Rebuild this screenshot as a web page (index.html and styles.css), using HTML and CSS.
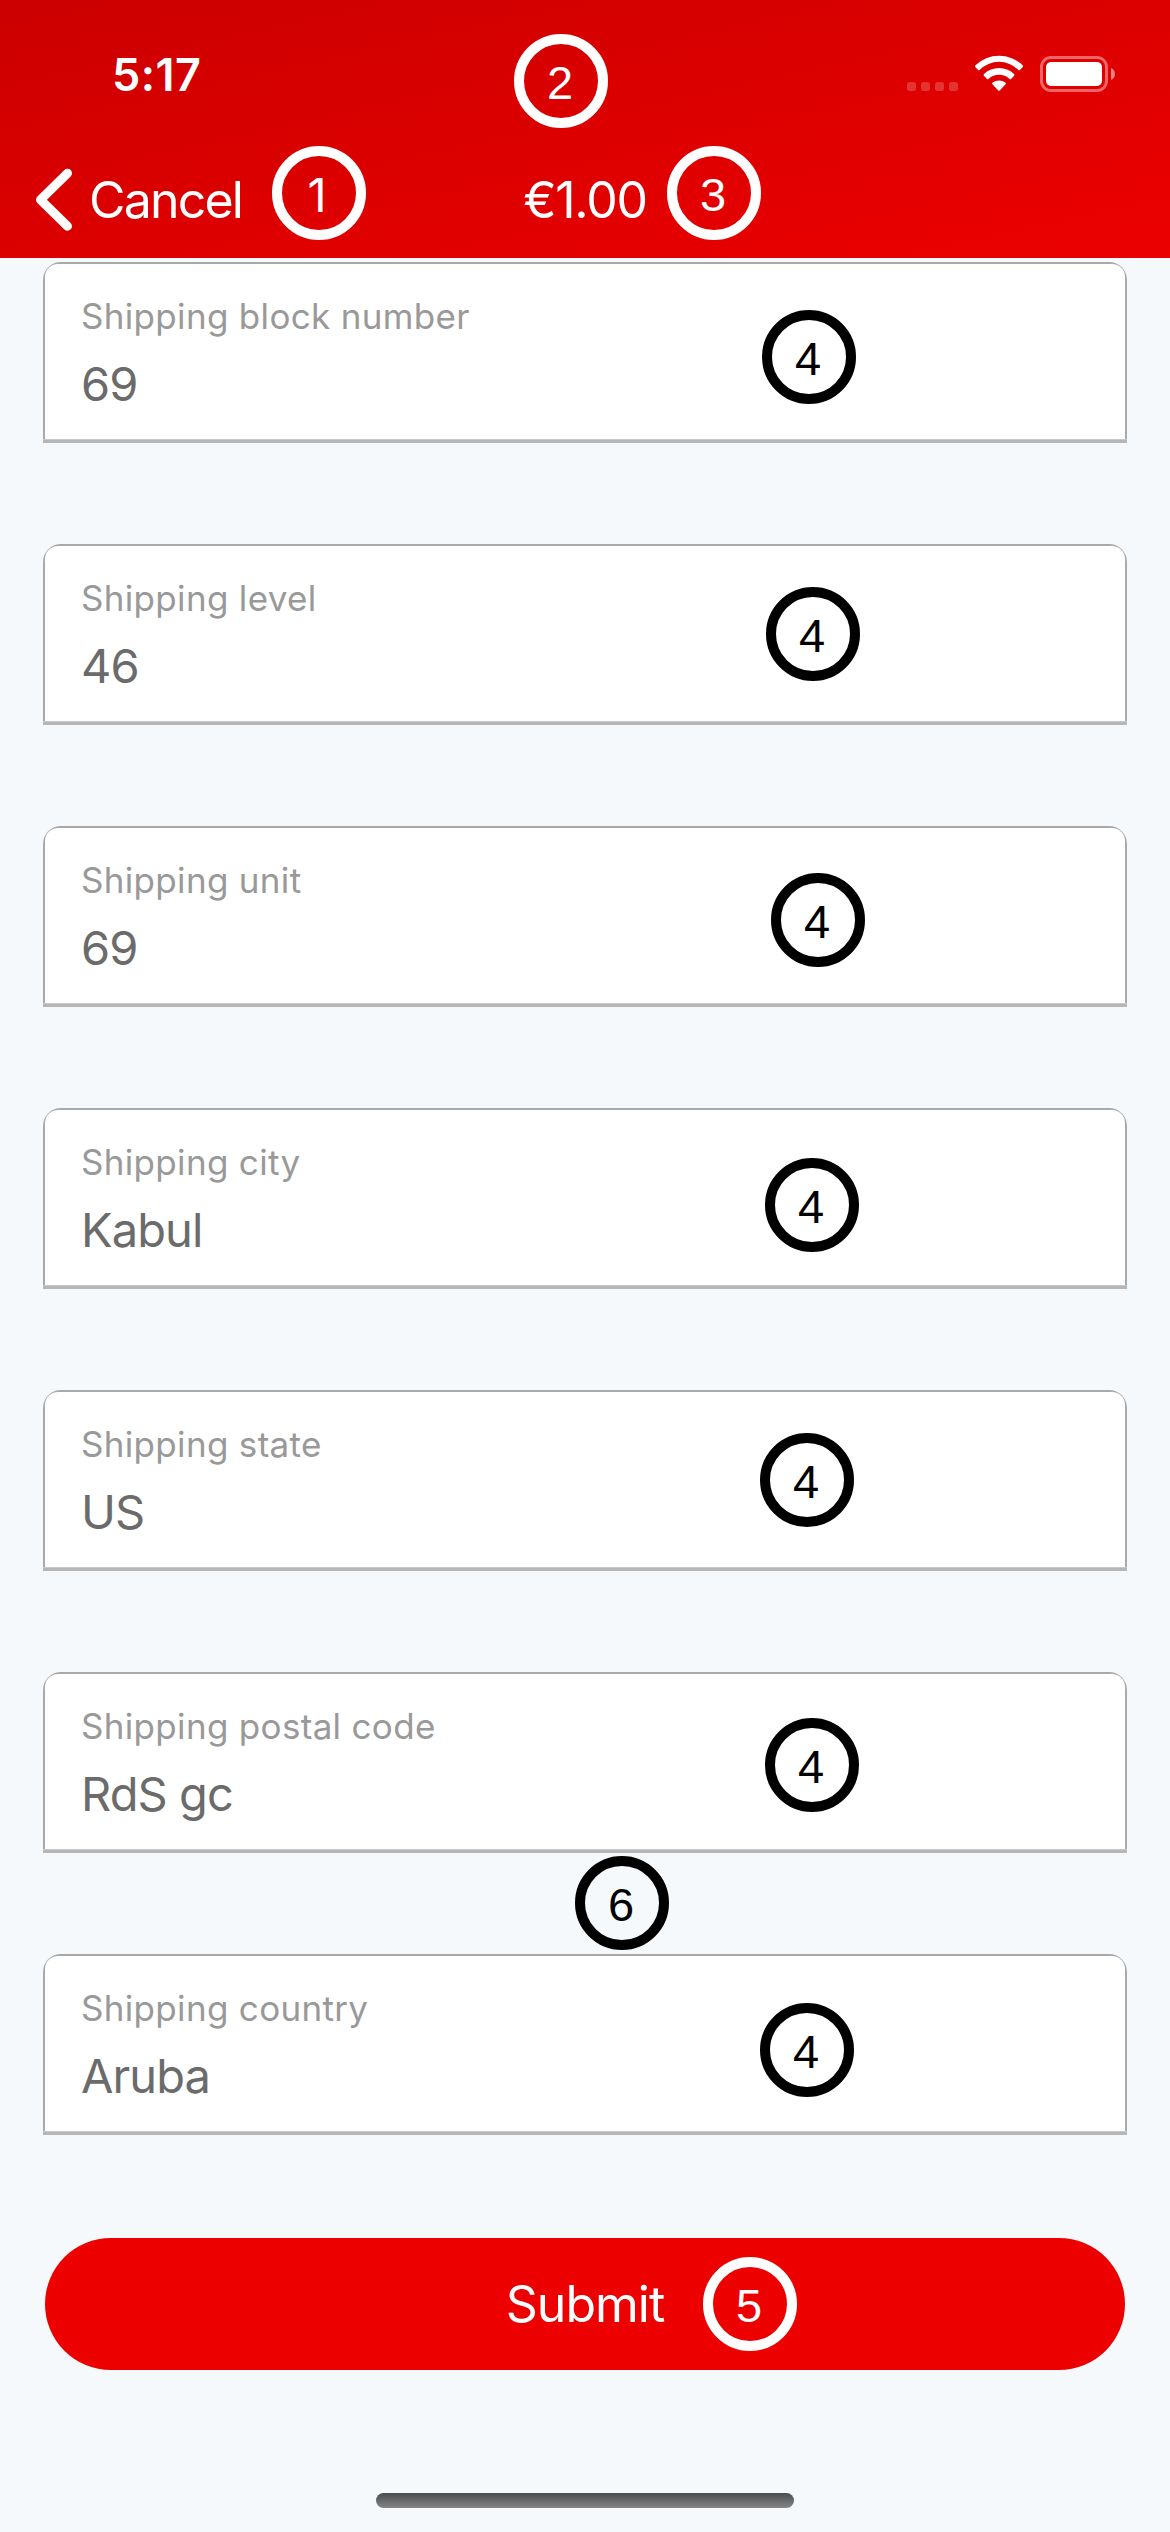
FILE: index.html
```html
<!DOCTYPE html>
<html lang="en">
<head>
<meta charset="utf-8">
<title>Shipping details</title>
<link rel="stylesheet" href="styles.css">
</head>
<body>
<div class="screen">
  <header class="header">
    <div class="status-bar">
      <span class="time">5:17</span>
      <svg class="status-icons" width="209" height="38" viewBox="0 0 209 38" fill="#fff">
        <g opacity=".2">
          <rect x="1" y="28" width="9" height="9" rx="2.8"/>
          <rect x="15" y="28" width="9" height="9" rx="2.8"/>
          <rect x="29" y="28" width="9" height="9" rx="2.8"/>
          <rect x="43" y="28" width="9" height="9" rx="2.8"/>
        </g>
        <path d="M69.4 11.2A34 34 0 0 1 116.600 11.2Q117.500 12.100 116.700 13L113.900 16Q113.200 16.700 112.400 16A27 27 0 0 0 73.600 16Q72.800 16.700 72.100 16L69.300 13Q68.500 12.100 69.400 11.200Z"/>
        <path d="M78 20A22 22 0 0 1 108 20Q108.900 20.900 108.100 21.800L105.100 24.900Q104.400 25.600 103.500 24.900A15.600 15.600 0 0 0 82.500 24.900Q81.600 25.600 80.900 24.900L77.900 21.800Q77.100 20.900 78 20Z"/>
        <path d="M86.600 28.600A10.500 10.500 0 0 1 99.400 28.600Q100.400 29.500 99.600 30.300L93.700 36.500Q93 37.200 92.300 36.500L86.400 30.300Q85.600 29.500 86.600 28.600Z"/>
        <rect x="135.500" y="3.500" width="65" height="33" rx="9.500" fill="none" stroke="#fff" stroke-width="3" opacity=".4"/>
        <rect x="140" y="8" width="56" height="24" rx="5"/>
        <path d="M205 14C207.500 15 209 17.300 209 20S207.500 25 205 26Z" opacity=".5"/>
      </svg>
    </div>
    <div class="nav-bar">
      <a class="back">
        <svg class="chevron" width="38" height="64" viewBox="0 0 38 64" fill="none" stroke="#fff" stroke-width="9" stroke-linecap="round" stroke-linejoin="round"><path d="M32.500 5.200 5.500 31.700 32.500 58.200"/></svg>
        <span class="back-text">Cancel</span>
      </a>
      <h1 class="amount">€1.00</h1>
    </div>
  </header>

  <main class="form">
    <div class="field"><div class="field-body"><span class="label">Shipping block number</span><span class="value">69</span></div></div>
    <div class="field"><div class="field-body"><span class="label">Shipping level</span><span class="value">46</span></div></div>
    <div class="field"><div class="field-body"><span class="label">Shipping unit</span><span class="value">69</span></div></div>
    <div class="field"><div class="field-body"><span class="label">Shipping city</span><span class="value">Kabul</span></div></div>
    <div class="field"><div class="field-body"><span class="label">Shipping state</span><span class="value">US</span></div></div>
    <div class="field"><div class="field-body"><span class="label">Shipping postal code</span><span class="value">RdS gc</span></div></div>
    <div class="field"><div class="field-body"><span class="label">Shipping country</span><span class="value">Aruba</span></div></div>
  </main>

  <button class="submit">Submit</button>
  <div class="home-indicator"></div>

  <span class="badge light cancel-badge">1</span>
  <span class="badge light header-badge">2</span>
  <span class="badge light amount-badge">3</span>
  <span class="badge block-badge">4</span>
  <span class="badge level-badge">4</span>
  <span class="badge unit-badge">4</span>
  <span class="badge city-badge">4</span>
  <span class="badge state-badge">4</span>
  <span class="badge postal-badge">4</span>
  <span class="badge country-badge">4</span>
  <span class="badge light submit-badge">5</span>
  <span class="badge form-badge">6</span>
</div>
</body>
</html>
```
FILE: styles.css
```css
* { box-sizing: border-box; }

body {
  margin: 0;
  background: #f5f9fc;
  font-family: Inter, "Liberation Sans", sans-serif;
}

.screen {
  position: relative;
  display: flex;
  flex-direction: column;
  width: 1170px;
  height: 2532px;
  overflow: hidden;
}

.header {
  height: 258px;
  background: linear-gradient(to bottom right, #cc0000, #ec0000);
  color: #fff;
}

.status-bar {
  display: flex;
  justify-content: space-between;
  align-items: flex-start;
  height: 140px;
  padding: 45px 55px 0 112px;
}

.time {
  font-size: 45px;
  font-weight: 600;
  letter-spacing: 0.4px;
  line-height: 60px;
}

.status-icons { margin-top: 9px; }

.nav-bar {
  display: grid;
  grid-template-columns: 1fr auto 1fr;
  align-items: center;
  height: 118px;
  padding: 2px 35px 0;
}

.back {
  display: flex;
  align-items: center;
  gap: 16px;
}

.back-text,
.amount {
  margin: 0;
  font-size: 50px;
  font-weight: 400;
  line-height: 64px;
}

.back-text { letter-spacing: -1.8px; }

.amount { letter-spacing: -1.3px; }

.form {
  display: flex;
  flex-direction: column;
  gap: 101px;
  padding: 4px 43px 0;
}

.field {
  height: 181px;
  padding: 2px 2px 4px;
  border-radius: 18px 18px 0 0;
  background: linear-gradient(#a9a9a9 177px, #c8c8c8 177px, #c8c8c8 178px, #b6b6b6 178px);
}

.field-body {
  display: flex;
  flex-direction: column;
  gap: 16px;
  height: 100%;
  padding: 30px 36px 0;
  border-radius: 13px 13px 0 0;
  background: #fff;
}

.label {
  color: #999;
  font-size: 35px;
  letter-spacing: 0.32px;
  line-height: 44px;
}

.value {
  color: #6b6b6b;
  font-size: 47px;
  letter-spacing: -0.9px;
  line-height: 60px;
}

.submit {
  height: 132px;
  margin: 103px 45px 0;
  padding: 0;
  border: 0;
  border-radius: 66px;
  background: #ec0000;
  color: #fff;
  font: 400 50px/132px Inter, "Liberation Sans", sans-serif;
  letter-spacing: -1px;
}

.home-indicator {
  width: 418px;
  height: 15px;
  margin: 123px auto 0;
  border-radius: 8px;
  background: linear-gradient(#4b4c4d, #858687);
}

.badge {
  position: absolute;
  width: 94px;
  height: 94px;
  padding: 2px 2px 0 0;
  border: 10px solid #000;
  border-radius: 50%;
  color: #000;
  font: 47px/74px "Liberation Sans", Arial, sans-serif;
  text-align: center;
}

.light {
  border-color: #fff;
  color: #fff;
}

.cancel-badge {
  left: 272px;
  top: 146px;
  padding-right: 4px;
  font-family: Inter, "Liberation Sans", sans-serif;
}

.header-badge { left: 514px; top: 34px; }
.amount-badge { left: 667px; top: 146px; }
.block-badge { left: 762px; top: 310px; }
.level-badge { left: 766px; top: 587px; }
.unit-badge { left: 771px; top: 873px; }
.city-badge { left: 765px; top: 1158px; }
.state-badge { left: 760px; top: 1433px; }
.postal-badge { left: 765px; top: 1718px; }
.country-badge { left: 760px; top: 2003px; }
.submit-badge { left: 703px; top: 2257px; }
.form-badge { left: 575px; top: 1856px; }
```
